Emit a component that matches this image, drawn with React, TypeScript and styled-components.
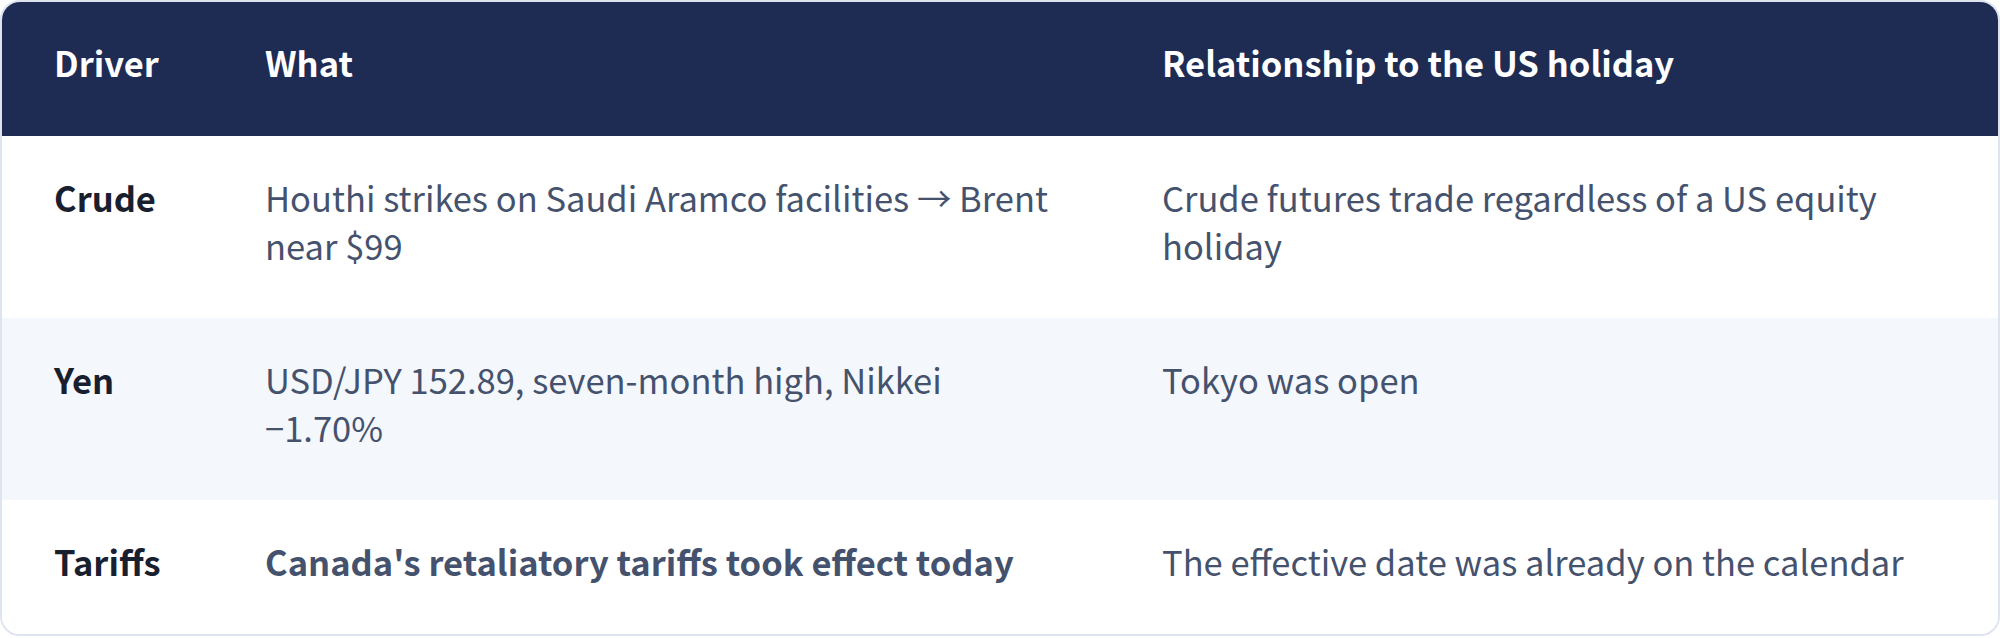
import styled, { createGlobalStyle } from "styled-components";

const GlobalStyle = createGlobalStyle`
  html, body {
    margin: 0;
    padding: 0;
    background: #ffffff;
  }
  body {
    font-family: "Noto Sans CJK KR", "Noto Sans", sans-serif;
  }
`;

const Frame = styled.div`
  width: 2000px;
  box-sizing: border-box;
  border: 2px solid #dde4f0;
  border-radius: 20px;
  overflow: hidden;
  background: #ffffff;
`;

const Table = styled.table`
  width: 100%;
  table-layout: fixed;
  border-collapse: separate;
  border-spacing: 0;
`;

const HeadCell = styled.th`
  background: #1e2c54;
  color: #ffffff;
  font-size: 34.5px;
  font-weight: 700;
  line-height: 48px;
  text-align: left;
  padding: 36px 52px 50px;
`;

const Row = styled.tr<{ $alt?: boolean }>`
  background: ${(p) => (p.$alt ? "#f4f7fc" : "#ffffff")};

  & + & > td {
    border-top: 2px solid #dde4f0;
  }
`;

const Cell = styled.td<{ $label?: boolean; $strong?: boolean }>`
  vertical-align: top;
  padding: 37px 52px 49px;
  font-size: 34.5px;
  line-height: 48px;
  color: ${(p) => (p.$label ? "#18202f" : "#45526d")};
  font-weight: ${(p) => (p.$label || p.$strong ? 700 : 400)};
`;

type Driver = {
  name: string;
  what: string;
  relation: string;
  strong?: boolean;
};

const drivers: Driver[] = [
  {
    name: "Crude",
    what: "Houthi strikes on Saudi Aramco facilities → Brent near $99",
    relation: "Crude futures trade regardless of a US equity holiday",
  },
  {
    name: "Yen",
    what: "USD/JPY 152.89, seven-month high, Nikkei −1.70%",
    relation: "Tokyo was open",
  },
  {
    name: "Tariffs",
    what: "Canada's retaliatory tariffs took effect today",
    relation: "The effective date was already on the calendar",
    strong: true,
  },
];

export default function App() {
  return (
    <>
      <GlobalStyle />
      <Frame>
        <Table>
          <colgroup>
            <col style={{ width: 211 }} />
            <col style={{ width: 897 }} />
            <col />
          </colgroup>
          <thead>
            <tr>
              <HeadCell>Driver</HeadCell>
              <HeadCell>What</HeadCell>
              <HeadCell>Relationship to the US holiday</HeadCell>
            </tr>
          </thead>
          <tbody>
            {drivers.map((d, i) => (
              <Row key={d.name} $alt={i % 2 === 1}>
                <Cell $label>{d.name}</Cell>
                <Cell $strong={d.strong}>{d.what}</Cell>
                <Cell>{d.relation}</Cell>
              </Row>
            ))}
          </tbody>
        </Table>
      </Frame>
    </>
  );
}
